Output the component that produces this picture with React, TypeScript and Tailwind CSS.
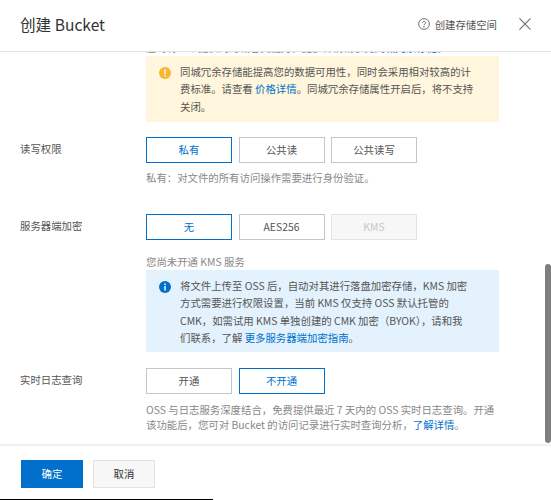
import React from "react";

function Opt({ label, active, disabled }: { label: string; active?: boolean; disabled?: boolean }) {
  const cls = active
    ? "border-[#0070cc] text-[#0070cc] bg-white"
    : disabled
    ? "border-[#e3e3e3] text-[#c8c8c8] bg-[#f7f7f7]"
    : "border-[#c4c6cf] text-[#555555] bg-white";
  return (
    <div className={`w-[86px] h-[26px] border flex items-center justify-center text-[10.4px] ${cls}`}>{label}</div>
  );
}

function Row({ label, mt, children }: { label: string; mt: string; children: React.ReactNode }) {
  return (
    <div className={`flex pl-5 pr-[52px] ${mt}`}>
      <div className="w-[126px] shrink-0 text-[10.4px] leading-[17px] text-[#555555] pt-[3px] whitespace-nowrap">{label}</div>
      <div className="flex-1 min-w-0">{children}</div>
    </div>
  );
}

export default function App() {
  return (
    <div className="w-[551px] h-[500px] bg-white flex flex-col overflow-hidden font-['Noto_Sans_CJK_SC','Noto_Sans',sans-serif] text-[#333333]">
      <header className="h-[52px] shrink-0 border-b border-[#e3e3e3] pl-5 pr-5 pb-[2px] flex items-center justify-between">
        <div className="text-[15.6px] text-[#333333]">创建 Bucket</div>
        <div className="flex items-center">
          <svg width="12" height="12" viewBox="0 0 13 13" fill="none" stroke="#555" strokeWidth="0.9">
            <circle cx="6.5" cy="6.5" r="5.8" />
            <path d="M4.9 5.2a1.6 1.6 0 1 1 2.4 1.4c-.5.3-.8.6-.8 1.2" />
            <circle cx="6.5" cy="9.6" r="0.35" fill="#555" />
          </svg>
          <span className="ml-[5px] text-[10.4px] text-[#555555]">创建存储空间</span>
          <svg className="ml-[22px]" width="12" height="12" viewBox="0 0 13 13" fill="none" stroke="#666" strokeWidth="1.1">
            <path d="M.5.5l12 12M12.5.5l-12 12" />
          </svg>
        </div>
      </header>

      <div className="relative flex-1 min-h-0 overflow-hidden">
        <div className="pl-[146px] pr-[52px]">
          <div className="h-[4px] overflow-hidden text-[10.4px] text-[#888888] leading-[17px]">
            <div className="-mt-[13px] whitespace-nowrap">
              届时将一个提供的跨城容灾能力，更多详情请参见<span className="text-[#0070cc]">同城冗余存储</span>。
            </div>
          </div>
          <div className="bg-[#fff6dd] h-[66px] flex pl-[13px] pt-[7px]">
            <svg className="mt-[4px] shrink-0" width="12" height="12" viewBox="0 0 13 13">
              <circle cx="6.5" cy="6.5" r="6.5" fill="#fbb531" />
              <rect x="5.7" y="2.6" width="1.6" height="5" fill="#fff" />
              <rect x="5.7" y="8.6" width="1.6" height="1.7" fill="#fff" />
            </svg>
            <p className="ml-[9px] text-[10.4px] leading-[17.33px] text-[#555555] whitespace-nowrap">
              同城冗余存储能提高您的数据可用性，同时会采用相对较高的计<br />
              费标准。请查看 <span className="text-[#0070cc]">价格详情</span>。同城冗余存储属性开启后，将不支持<br />
              关闭。
            </p>
          </div>
        </div>

        <Row label="读写权限" mt="mt-[15px]">
          <div className="flex gap-[6.5px]">
            <Opt label="私有" active />
            <Opt label="公共读" />
            <Opt label="公共读写" />
          </div>
          <p className="mt-[6px] text-[10.4px] leading-[17px] text-[#888888]">私有：对文件的所有访问操作需要进行身份验证。</p>
        </Row>

        <Row label="服务器端加密" mt="mt-[28px]">
          <div className="flex gap-[6.5px]">
            <Opt label="无" active />
            <Opt label="AES256" />
            <Opt label="KMS" disabled />
          </div>
          <p className="mt-[14px] pb-[1px] text-[10.4px] leading-[15px] text-[#888888]">您尚未开通 KMS 服务</p>
          <div className="bg-[#e3f2fd] h-[82px] flex pl-[13px] pt-[7px]">
            <svg className="mt-[4px] shrink-0" width="12" height="12" viewBox="0 0 13 13">
              <circle cx="6.5" cy="6.5" r="6.5" fill="#0070cc" />
              <rect x="5.7" y="5.4" width="1.6" height="5" fill="#fff" />
              <rect x="5.7" y="2.7" width="1.6" height="1.7" fill="#fff" />
            </svg>
            <p className="ml-[9px] text-[10.4px] leading-[17.33px] text-[#555555] whitespace-nowrap">
              将文件上传至 OSS 后，自动对其进行落盘加密存储，KMS 加密<br />
              方式需要进行权限设置，当前 KMS 仅支持 OSS 默认托管的<br />
              CMK，如需试用 KMS 单独创建的 CMK 加密（BYOK），请和我<br />
              们联系，了解 <span className="text-[#0070cc]">更多服务器端加密指南</span>。
            </p>
          </div>
        </Row>

        <Row label="实时日志查询" mt="mt-[16px]">
          <div className="flex gap-[6.5px]">
            <Opt label="开通" />
            <Opt label="不开通" active />
          </div>
          <p className="mt-[8px] text-[10.4px] leading-[15.3px] text-[#888888] whitespace-nowrap">
            OSS 与日志服务深度结合，免费提供最近 7 天内的 OSS 实时日志查询。开通<br />
            该功能后，您可对 Bucket 的访问记录进行实时查询分析，<span className="text-[#0070cc]">了解详情</span>。
          </p>
        </Row>

        <div className="absolute right-0 top-[212px] w-[6px] h-[179px] rounded-[3px] bg-[#7f7f7f]" />
      </div>

      <footer className="h-[55px] shrink-0 border-t-2 border-[#f0f0f0] pl-[21px] pt-[14px]">
        <div className="flex gap-[10px]">
          <div className="w-[62px] h-[28px] bg-[#0070cc] text-white text-[10.4px] flex items-center justify-center">确定</div>
          <div className="w-[62px] h-[28px] bg-[#f7f7f7] border border-[#e3e3e3] text-[#333333] text-[10.4px] flex items-center justify-center">取消</div>
        </div>
      </footer>
      <div className="h-px w-[213px] shrink-0 bg-black" />
    </div>
  );
}
